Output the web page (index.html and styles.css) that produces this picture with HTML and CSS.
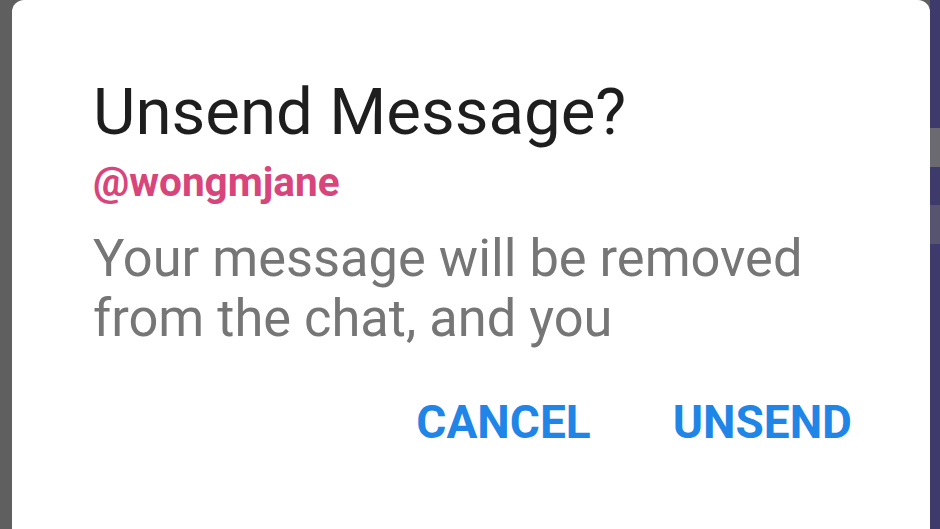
FILE: index.html
```html
<!DOCTYPE html>
<html>
<head>
<meta charset="utf-8">
<link rel="stylesheet" href="styles.css">
</head>
<body>
<div class="screen">
  <div class="edge-left"></div>
  <div class="dialog">
    <h1 class="title">Unsend Message?</h1>
    <div class="handle">@wongmjane</div>
    <p class="body">Your message will be removed<br>from the chat, and you</p>
    <div class="actions">
      <button class="btn">CANCEL</button>
      <button class="btn">UNSEND</button>
    </div>
  </div>
  <div class="edge-right">
    <div class="blk blk1"></div>
    <div class="blk blk2"></div>
  </div>
</div>
</body>
</html>
```

FILE: styles.css
```css
html, body {
  margin: 0;
  padding: 0;
  width: 940px;
  height: 529px;
  overflow: hidden;
  background: #5f5f5f;
}
.screen {
  display: flex;
  width: 940px;
  height: 529px;
}
.edge-left {
  width: 12px;
  flex: none;
  background: #5f5f5f;
}
.dialog {
  flex: 1;
  background: #ffffff;
  border-radius: 12px 12px 0 0;
  padding: 79px 0 0 81px;
  font-family: Roboto, "Liberation Sans", sans-serif;
}
.edge-right {
  width: 10px;
  flex: none;
  background: #3e3a6c;
  display: flex;
  flex-direction: column;
  padding-top: 128px;
  gap: 38px;
}
.blk {
  height: 39px;
  background: #6a6a70;
}
.blk2 {
  background: #56546e;
}
.title {
  margin: 0;
  font-size: 65.4px;
  font-weight: 400;
  line-height: 66px;
  color: #1e1e1e;
}
.handle {
  margin-top: 15px;
  font-size: 40.5px;
  font-weight: 700;
  line-height: 44px;
  color: #d8457b;
}
.body {
  margin: 24px 0 0 0;
  font-size: 52.4px;
  line-height: 60px;
  color: #767676;
}
.actions {
  display: flex;
  justify-content: flex-end;
  gap: 82px;
  padding-right: 78px;
  margin-top: 50px;
}
.btn {
  border: none;
  background: none;
  padding: 0;
  font-family: Roboto, "Liberation Sans", sans-serif;
  font-size: 46px;
  font-weight: 700;
  color: #1f85e6;
  line-height: 48px;
}
```
